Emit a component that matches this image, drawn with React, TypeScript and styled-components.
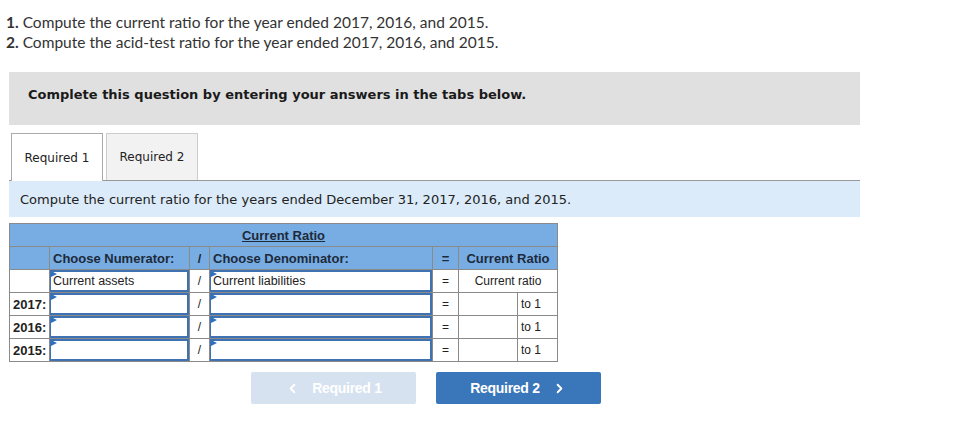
import React from 'react';
import styled, { createGlobalStyle } from 'styled-components';
import { ChevronLeft, ChevronRight } from 'lucide-react';

const GlobalStyle = createGlobalStyle`
  html, body {
    margin: 0;
    padding: 0;
    background: #ffffff;
  }
  body {
    font-family: 'Liberation Sans', Arial, sans-serif;
    color: #222;
  }
`;

const Page = styled.div`
  width: 958px;
  height: 442px;
  padding: 12px 0 0 9px;
  box-sizing: border-box;
`;

const Instructions = styled.div`
  font-family: Lato, 'Open Sans', sans-serif;
  font-size: 15.5px;
  line-height: 20px;
  color: #333;
  margin-left: -3px;
  b {
    font-weight: 700;
  }
`;

const Banner = styled.div`
  margin-top: 20px;
  width: 851px;
  height: 53px;
  background: #e0e0e0;
  padding: 15px 0 0 19px;
  box-sizing: border-box;
  font-family: 'DejaVu Sans', Verdana, sans-serif;
  font-weight: 700;
  font-size: 13px;
  color: #1a1a1a;
`;

const TabBar = styled.div`
  margin-top: 8px;
  width: 851px;
  display: flex;
  gap: 3px;
  padding-left: 2px;
  box-sizing: border-box;
  border-bottom: 1px solid #999;
`;

const Tab = styled.div<{ $active?: boolean }>`
  width: 92px;
  box-sizing: border-box;
  border: 1px solid ${(p) => (p.$active ? '#aaa' : '#ccc')};
  border-bottom: none;
  background: ${(p) => (p.$active ? '#fff' : '#f2f2f2')};
  margin-bottom: ${(p) => (p.$active ? '-1px' : '0')};
  height: ${(p) => (p.$active ? '48px' : '47px')};
  display: flex;
  align-items: center;
  justify-content: center;
  font-family: 'DejaVu Sans', Verdana, sans-serif;
  font-size: 12px;
  color: #222;
`;

const Prompt = styled.div`
  width: 851px;
  height: 36px;
  background: #dbebf9;
  display: flex;
  align-items: center;
  padding-left: 11px;
  box-sizing: border-box;
  font-family: 'DejaVu Sans', Verdana, sans-serif;
  font-size: 13px;
  color: #222;
`;

const Table = styled.table`
  margin-top: 6px;
  border-collapse: collapse;
  table-layout: fixed;
  width: 549px;
  font-size: 12px;
  color: #222;
`;

const HeadCell = styled.td<{ $align?: string }>`
  background: #78ade4;
  border: 1px solid #8a8a8a;
  height: 22px;
  padding: 0 3px;
  font-weight: 700;
  font-size: 13px;
  color: #1d2a3a;
  text-align: ${(p) => p.$align || 'center'};
`;

const TitleLink = styled.span`
  text-decoration: underline;
`;

const Cell = styled.td<{ $align?: string; $bold?: boolean }>`
  border: 1px solid #8a8a8a;
  height: 22px;
  padding: 0 3px;
  text-align: ${(p) => p.$align || 'center'};
  font-weight: ${(p) => (p.$bold ? 700 : 400)};
  font-size: ${(p) => (p.$bold ? '13px' : '12px')};
  color: #222;
`;

const InputCell = styled.td`
  border: 1px solid #8a8a8a;
  padding: 0;
  height: 22px;
`;

const Field = styled.div`
  position: relative;
  height: 22px;
  box-sizing: border-box;
  border: 2px solid #3f72b3;
  border-left-width: 1px;
  background: #fff;
  padding-left: 2px;
  display: flex;
  align-items: center;
  font-size: 12.5px;
  color: #222;
  &::before {
    content: '';
    position: absolute;
    left: 0;
    top: -1px;
    border-top: 3px solid transparent;
    border-bottom: 3px solid transparent;
    border-left: 6px solid #2f6fc0;
  }
`;

const Nav = styled.div`
  margin-top: 10px;
  margin-left: 242px;
  display: flex;
  gap: 20px;
`;

const NavButton = styled.div<{ $disabled?: boolean }>`
  width: 165px;
  height: 32px;
  border-radius: 2px;
  background: ${(p) => (p.$disabled ? '#d6e2f0' : '#3a76ba')};
  color: #fff;
  display: flex;
  align-items: center;
  justify-content: center;
  gap: 12px;
  font-weight: 700;
  font-size: 14px;
  letter-spacing: -0.3px;
`;

const years = ['2017:', '2016:', '2015:'];

export default function App() {
  return (
    <Page>
      <GlobalStyle />
      <Instructions>
        <div>
          <b>1.</b> Compute the current ratio for the year ended 2017, 2016, and 2015.
        </div>
        <div>
          <b>2.</b> Compute the acid-test ratio for the year ended 2017, 2016, and 2015.
        </div>
      </Instructions>
      <Banner>Complete this question by entering your answers in the tabs below.</Banner>
      <TabBar>
        <Tab $active>Required 1</Tab>
        <Tab>Required 2</Tab>
      </TabBar>
      <Prompt>Compute the current ratio for the years ended December 31, 2017, 2016, and 2015.</Prompt>
      <Table>
        <colgroup>
          <col style={{ width: 40 }} />
          <col style={{ width: 140 }} />
          <col style={{ width: 20 }} />
          <col style={{ width: 223 }} />
          <col style={{ width: 26 }} />
          <col style={{ width: 59 }} />
          <col style={{ width: 40 }} />
        </colgroup>
        <tbody>
          <tr>
            <HeadCell colSpan={7}>
              <TitleLink>Current Ratio</TitleLink>
            </HeadCell>
          </tr>
          <tr>
            <HeadCell />
            <HeadCell $align="left">Choose Numerator:</HeadCell>
            <HeadCell>/</HeadCell>
            <HeadCell $align="left">Choose Denominator:</HeadCell>
            <HeadCell>=</HeadCell>
            <HeadCell colSpan={2}>Current Ratio</HeadCell>
          </tr>
          <tr>
            <Cell />
            <InputCell>
              <Field>Current assets</Field>
            </InputCell>
            <Cell>/</Cell>
            <InputCell>
              <Field>Current liabilities</Field>
            </InputCell>
            <Cell>=</Cell>
            <Cell colSpan={2}>Current ratio</Cell>
          </tr>
          {years.map((y) => (
            <tr key={y}>
              <Cell $align="left" $bold>
                {y}
              </Cell>
              <InputCell>
                <Field />
              </InputCell>
              <Cell>/</Cell>
              <InputCell>
                <Field />
              </InputCell>
              <Cell>=</Cell>
              <Cell />
              <Cell $align="left">to 1</Cell>
            </tr>
          ))}
        </tbody>
      </Table>
      <Nav>
        <NavButton $disabled>
          <ChevronLeft size={15} strokeWidth={3} />
          Required 1
        </NavButton>
        <NavButton>
          Required 2
          <ChevronRight size={15} strokeWidth={3} />
        </NavButton>
      </Nav>
    </Page>
  );
}
